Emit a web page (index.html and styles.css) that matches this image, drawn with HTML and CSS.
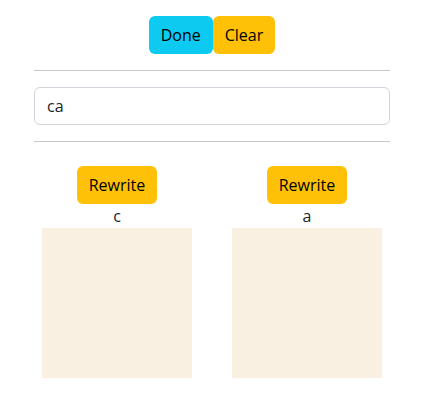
FILE: index.html
```html
<!DOCTYPE html>
<html>
<head>
<meta charset="utf-8">
<link rel="stylesheet" href="styles.css">
</head>
<body>
<div class="page">
  <div class="toolbar">
    <button class="btn btn-info">Done</button><button class="btn btn-warning">Clear</button>
  </div>
  <hr class="rule">
  <input class="field" type="text" value="ca">
  <hr class="rule">
  <div class="cols">
    <div class="col">
      <button class="btn btn-warning">Rewrite</button>
      <div class="label">c</div>
      <div class="canvas"></div>
    </div>
    <div class="col">
      <button class="btn btn-warning">Rewrite</button>
      <div class="label">a</div>
      <div class="canvas"></div>
    </div>
  </div>
</div>
</body>
</html>
```
FILE: styles.css
```css
* { box-sizing: border-box; }
body {
  margin: 0;
  font-family: "Open Sans", "DejaVu Sans", sans-serif;
  font-size: 16px;
  line-height: 1.5;
  color: #212529;
  background: #fff;
}
.page {
  width: 356px;
  margin-left: 34px;
  padding-top: 16px;
}
.toolbar {
  display: flex;
  justify-content: center;
}
.btn {
  font-family: inherit;
  font-size: 16px;
  line-height: 24px;
  height: 38px;
  padding: 6px 12px;
  border: 0;
  border-radius: 6px;
  color: #000;
}
.btn-info { background: #0dcaf0; }
.btn-warning { background: #ffc107; }
.rule {
  margin: 16px 0;
  border: 0;
  border-top: 1px solid #c8c8c8;
  height: 0;
}
.field {
  display: block;
  width: 100%;
  height: 38px;
  padding: 6px 12px;
  font-family: inherit;
  font-size: 16px;
  color: #212529;
  border: 1px solid #ced4da;
  border-radius: 6px;
  outline: none;
}
.cols {
  display: flex;
  gap: 40px;
  margin-left: 8px;
  padding-top: 8px;
}
.col {
  width: 150px;
  display: flex;
  flex-direction: column;
  align-items: center;
}
.label {
  line-height: 24px;
  color: #212529;
}
.canvas {
  width: 150px;
  height: 150px;
  background: #faf0e1;
}
```
